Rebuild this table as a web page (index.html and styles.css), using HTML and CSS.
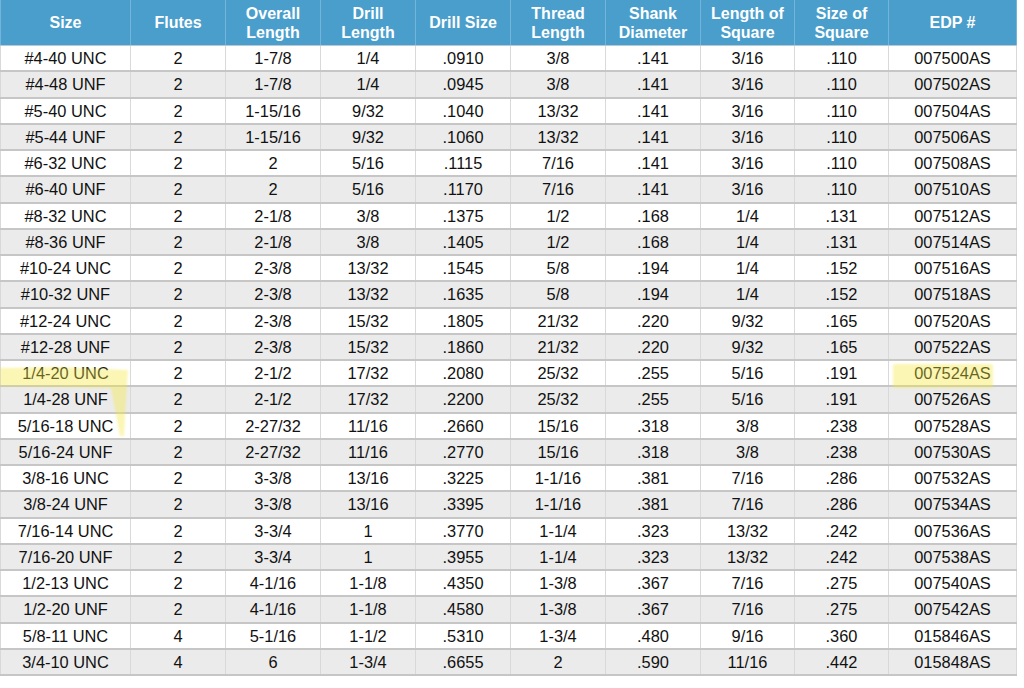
FILE: index.html
```html
<!DOCTYPE html>
<html>
<head>
<meta charset="utf-8">
<link rel="stylesheet" href="styles.css">
</head>
<body>
<div class="sheet">
<table class="spec">
<colgroup>
<col class="c-size"><col class="c-n"><col class="c-n"><col class="c-n"><col class="c-n"><col class="c-n"><col class="c-n"><col class="c-m"><col class="c-m"><col class="c-edp">
</colgroup>
<thead>
<tr><th>Size</th><th>Flutes</th><th>Overall<br>Length</th><th>Drill<br>Length</th><th>Drill Size</th><th>Thread<br>Length</th><th>Shank<br>Diameter</th><th>Length of<br>Square</th><th>Size of<br>Square</th><th>EDP #</th></tr>
</thead>
<tbody>
<tr><td>#4-40 UNC</td><td>2</td><td>1-7/8</td><td>1/4</td><td>.0910</td><td>3/8</td><td>.141</td><td>3/16</td><td>.110</td><td>007500AS</td></tr>
<tr><td>#4-48 UNF</td><td>2</td><td>1-7/8</td><td>1/4</td><td>.0945</td><td>3/8</td><td>.141</td><td>3/16</td><td>.110</td><td>007502AS</td></tr>
<tr><td>#5-40 UNC</td><td>2</td><td>1-15/16</td><td>9/32</td><td>.1040</td><td>13/32</td><td>.141</td><td>3/16</td><td>.110</td><td>007504AS</td></tr>
<tr><td>#5-44 UNF</td><td>2</td><td>1-15/16</td><td>9/32</td><td>.1060</td><td>13/32</td><td>.141</td><td>3/16</td><td>.110</td><td>007506AS</td></tr>
<tr><td>#6-32 UNC</td><td>2</td><td>2</td><td>5/16</td><td>.1115</td><td>7/16</td><td>.141</td><td>3/16</td><td>.110</td><td>007508AS</td></tr>
<tr><td>#6-40 UNF</td><td>2</td><td>2</td><td>5/16</td><td>.1170</td><td>7/16</td><td>.141</td><td>3/16</td><td>.110</td><td>007510AS</td></tr>
<tr><td>#8-32 UNC</td><td>2</td><td>2-1/8</td><td>3/8</td><td>.1375</td><td>1/2</td><td>.168</td><td>1/4</td><td>.131</td><td>007512AS</td></tr>
<tr><td>#8-36 UNF</td><td>2</td><td>2-1/8</td><td>3/8</td><td>.1405</td><td>1/2</td><td>.168</td><td>1/4</td><td>.131</td><td>007514AS</td></tr>
<tr><td>#10-24 UNC</td><td>2</td><td>2-3/8</td><td>13/32</td><td>.1545</td><td>5/8</td><td>.194</td><td>1/4</td><td>.152</td><td>007516AS</td></tr>
<tr><td>#10-32 UNF</td><td>2</td><td>2-3/8</td><td>13/32</td><td>.1635</td><td>5/8</td><td>.194</td><td>1/4</td><td>.152</td><td>007518AS</td></tr>
<tr><td>#12-24 UNC</td><td>2</td><td>2-3/8</td><td>15/32</td><td>.1805</td><td>21/32</td><td>.220</td><td>9/32</td><td>.165</td><td>007520AS</td></tr>
<tr><td>#12-28 UNF</td><td>2</td><td>2-3/8</td><td>15/32</td><td>.1860</td><td>21/32</td><td>.220</td><td>9/32</td><td>.165</td><td>007522AS</td></tr>
<tr><td>1/4-20 UNC</td><td>2</td><td>2-1/2</td><td>17/32</td><td>.2080</td><td>25/32</td><td>.255</td><td>5/16</td><td>.191</td><td>007524AS</td></tr>
<tr><td>1/4-28 UNF</td><td>2</td><td>2-1/2</td><td>17/32</td><td>.2200</td><td>25/32</td><td>.255</td><td>5/16</td><td>.191</td><td>007526AS</td></tr>
<tr><td>5/16-18 UNC</td><td>2</td><td>2-27/32</td><td>11/16</td><td>.2660</td><td>15/16</td><td>.318</td><td>3/8</td><td>.238</td><td>007528AS</td></tr>
<tr><td>5/16-24 UNF</td><td>2</td><td>2-27/32</td><td>11/16</td><td>.2770</td><td>15/16</td><td>.318</td><td>3/8</td><td>.238</td><td>007530AS</td></tr>
<tr><td>3/8-16 UNC</td><td>2</td><td>3-3/8</td><td>13/16</td><td>.3225</td><td>1-1/16</td><td>.381</td><td>7/16</td><td>.286</td><td>007532AS</td></tr>
<tr><td>3/8-24 UNF</td><td>2</td><td>3-3/8</td><td>13/16</td><td>.3395</td><td>1-1/16</td><td>.381</td><td>7/16</td><td>.286</td><td>007534AS</td></tr>
<tr><td>7/16-14 UNC</td><td>2</td><td>3-3/4</td><td>1</td><td>.3770</td><td>1-1/4</td><td>.323</td><td>13/32</td><td>.242</td><td>007536AS</td></tr>
<tr><td>7/16-20 UNF</td><td>2</td><td>3-3/4</td><td>1</td><td>.3955</td><td>1-1/4</td><td>.323</td><td>13/32</td><td>.242</td><td>007538AS</td></tr>
<tr><td>1/2-13 UNC</td><td>2</td><td>4-1/16</td><td>1-1/8</td><td>.4350</td><td>1-3/8</td><td>.367</td><td>7/16</td><td>.275</td><td>007540AS</td></tr>
<tr><td>1/2-20 UNF</td><td>2</td><td>4-1/16</td><td>1-1/8</td><td>.4580</td><td>1-3/8</td><td>.367</td><td>7/16</td><td>.275</td><td>007542AS</td></tr>
<tr><td>5/8-11 UNC</td><td>4</td><td>5-1/16</td><td>1-1/2</td><td>.5310</td><td>1-3/4</td><td>.480</td><td>9/16</td><td>.360</td><td>015846AS</td></tr>
<tr><td>3/4-10 UNC</td><td>4</td><td>6</td><td>1-3/4</td><td>.6655</td><td>2</td><td>.590</td><td>11/16</td><td>.442</td><td>015848AS</td></tr>
</tbody>
</table>
<svg class="marks" width="1024" height="688" viewBox="0 0 1024 688">
<defs>
<filter id="soft" x="-5%" y="-5%" width="110%" height="110%"><feGaussianBlur stdDeviation="0.8"/></filter>
</defs>
<path class="hl" filter="url(#soft)" d="M0 368 L60 367 L128 370 L126 400 L124 436 L120 436 L111 388 L60 387 L0 386 Z"/>
<rect class="hl" filter="url(#soft)" x="893" y="364" width="100" height="24" rx="2"/>
</svg>
</div>
</body>
</html>
```

FILE: styles.css
```css
html, body {
  margin: 0;
  padding: 0;
  background: #ffffff;
}

.sheet {
  position: relative;
  width: 1024px;
  height: 688px;
  overflow: hidden;
  font-family: "Liberation Sans", Arial, Helvetica, sans-serif;
}

.spec {
  width: 1016px;
  table-layout: fixed;
  border-collapse: collapse;
  font-size: 16.4px;
  color: #111111;
}

.c-size { width: 130px; }
.c-n { width: 95px; }
.c-m { width: 94px; }
.c-edp { width: 128px; }

.spec thead th {
  height: 45px;
  padding: 0 2px;
  background: #4a9ecb;
  color: #ffffff;
  font-weight: bold;
  font-size: 16px;
  line-height: 19px;
  text-align: center;
  vertical-align: middle;
  border-left: 1px solid #73b4d9;
  border-right: 1px solid #73b4d9;
  border-bottom: 1px solid #b9c9d3;
  border-top: 0;
}

.spec tbody td {
  height: 24.25px;
  padding: 0 2px;
  text-align: center;
  vertical-align: middle;
  line-height: 18px;
  border-left: 1px solid #d9d9d9;
  border-right: 1px solid #d9d9d9;
  border-bottom: 2px solid #c6c6c6;
}

.spec tbody tr:nth-child(even) td {
  background: #ebebeb;
}

.marks {
  position: absolute;
  left: 0;
  top: 0;
  pointer-events: none;
}

.hl {
  fill: rgba(245, 232, 60, 0.38);
}
```
